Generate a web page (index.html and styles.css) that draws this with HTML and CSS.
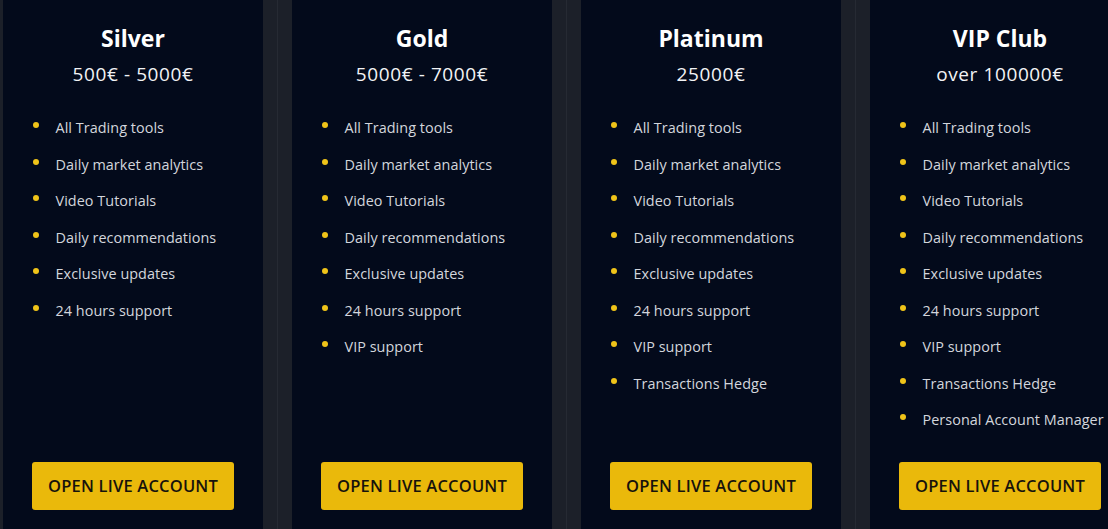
FILE: index.html
```html
<!DOCTYPE html>
<html lang="en">
<head>
<meta charset="utf-8">
<title>Account plans</title>
<link rel="stylesheet" href="styles.css">
</head>
<body>
<div class="plans">
  <section class="card">
    <h2 class="title">Silver</h2>
    <p class="price">500€ - 5000€</p>
    <ul class="features">
      <li>All Trading tools</li>
      <li>Daily market analytics</li>
      <li>Video Tutorials</li>
      <li>Daily recommendations</li>
      <li>Exclusive updates</li>
      <li>24 hours support</li>
    </ul>
    <a class="btn" href="#">OPEN LIVE ACCOUNT</a>
  </section>
  <div class="sep"></div>
  <section class="card">
    <h2 class="title">Gold</h2>
    <p class="price">5000€ - 7000€</p>
    <ul class="features">
      <li>All Trading tools</li>
      <li>Daily market analytics</li>
      <li>Video Tutorials</li>
      <li>Daily recommendations</li>
      <li>Exclusive updates</li>
      <li>24 hours support</li>
      <li>VIP support</li>
    </ul>
    <a class="btn" href="#">OPEN LIVE ACCOUNT</a>
  </section>
  <div class="sep"></div>
  <section class="card">
    <h2 class="title">Platinum</h2>
    <p class="price">25000€</p>
    <ul class="features">
      <li>All Trading tools</li>
      <li>Daily market analytics</li>
      <li>Video Tutorials</li>
      <li>Daily recommendations</li>
      <li>Exclusive updates</li>
      <li>24 hours support</li>
      <li>VIP support</li>
      <li>Transactions Hedge</li>
    </ul>
    <a class="btn" href="#">OPEN LIVE ACCOUNT</a>
  </section>
  <div class="sep"></div>
  <section class="card">
    <h2 class="title">VIP Club</h2>
    <p class="price">over 100000€</p>
    <ul class="features">
      <li>All Trading tools</li>
      <li>Daily market analytics</li>
      <li>Video Tutorials</li>
      <li>Daily recommendations</li>
      <li>Exclusive updates</li>
      <li>24 hours support</li>
      <li>VIP support</li>
      <li>Transactions Hedge</li>
      <li>Personal Account Manager</li>
    </ul>
    <a class="btn" href="#">OPEN LIVE ACCOUNT</a>
  </section>
</div>
</body>
</html>
```
FILE: styles.css
```css
html, body {
  margin: 0;
  padding: 0;
  height: 100%;
}
body {
  background: #1c2029;
  font-family: "Open Sans", "DejaVu Sans", sans-serif;
  overflow: hidden;
}
.plans {
  display: flex;
  height: 529px;
  padding-left: 3px;
}
.sep {
  flex: 0 0 29px;
  display: flex;
  justify-content: center;
}
.sep::before {
  content: "";
  width: 1px;
  background: #262a33;
}
.card {
  flex: 0 0 260px;
  background: #030a1b;
  display: flex;
  flex-direction: column;
  padding: 0 0 19px 29px;
  box-sizing: border-box;
}
.title {
  margin: 22px 0 0 -29px;
  text-align: center;
  color: #ffffff;
  font-size: 23px;
  font-weight: 700;
  line-height: 32px;
}
.price {
  margin: 8px 0 0 -29px;
  text-align: center;
  color: #f2f3f5;
  font-size: 19px;
  font-weight: 500;
  letter-spacing: 0.6px;
  line-height: 24px;
}
.features {
  list-style: none;
  margin: 31px 0 0 0;
  padding: 0;
  display: flex;
  flex-direction: column;
  gap: 15.5px;
}
.features li {
  position: relative;
  padding-left: 23.5px;
  color: #d3d6dd;
  font-size: 14.4px;
  letter-spacing: 0.05px;
  line-height: 21px;
  white-space: nowrap;
}
.features li::before {
  content: "";
  position: absolute;
  left: 1px;
  top: 5px;
  width: 6px;
  height: 6px;
  border-radius: 50%;
  background: #f0c419;
}
.btn {
  margin-top: auto;
  width: 202px;
  height: 48px;
  box-sizing: border-box;
  display: flex;
  align-items: center;
  justify-content: center;
  background: #eab90b;
  border-radius: 3px;
  color: #17130c;
  text-decoration: none;
  font-size: 16.5px;
  font-weight: 600;
  letter-spacing: 0.2px;
  padding-bottom: 1px;
}
```
